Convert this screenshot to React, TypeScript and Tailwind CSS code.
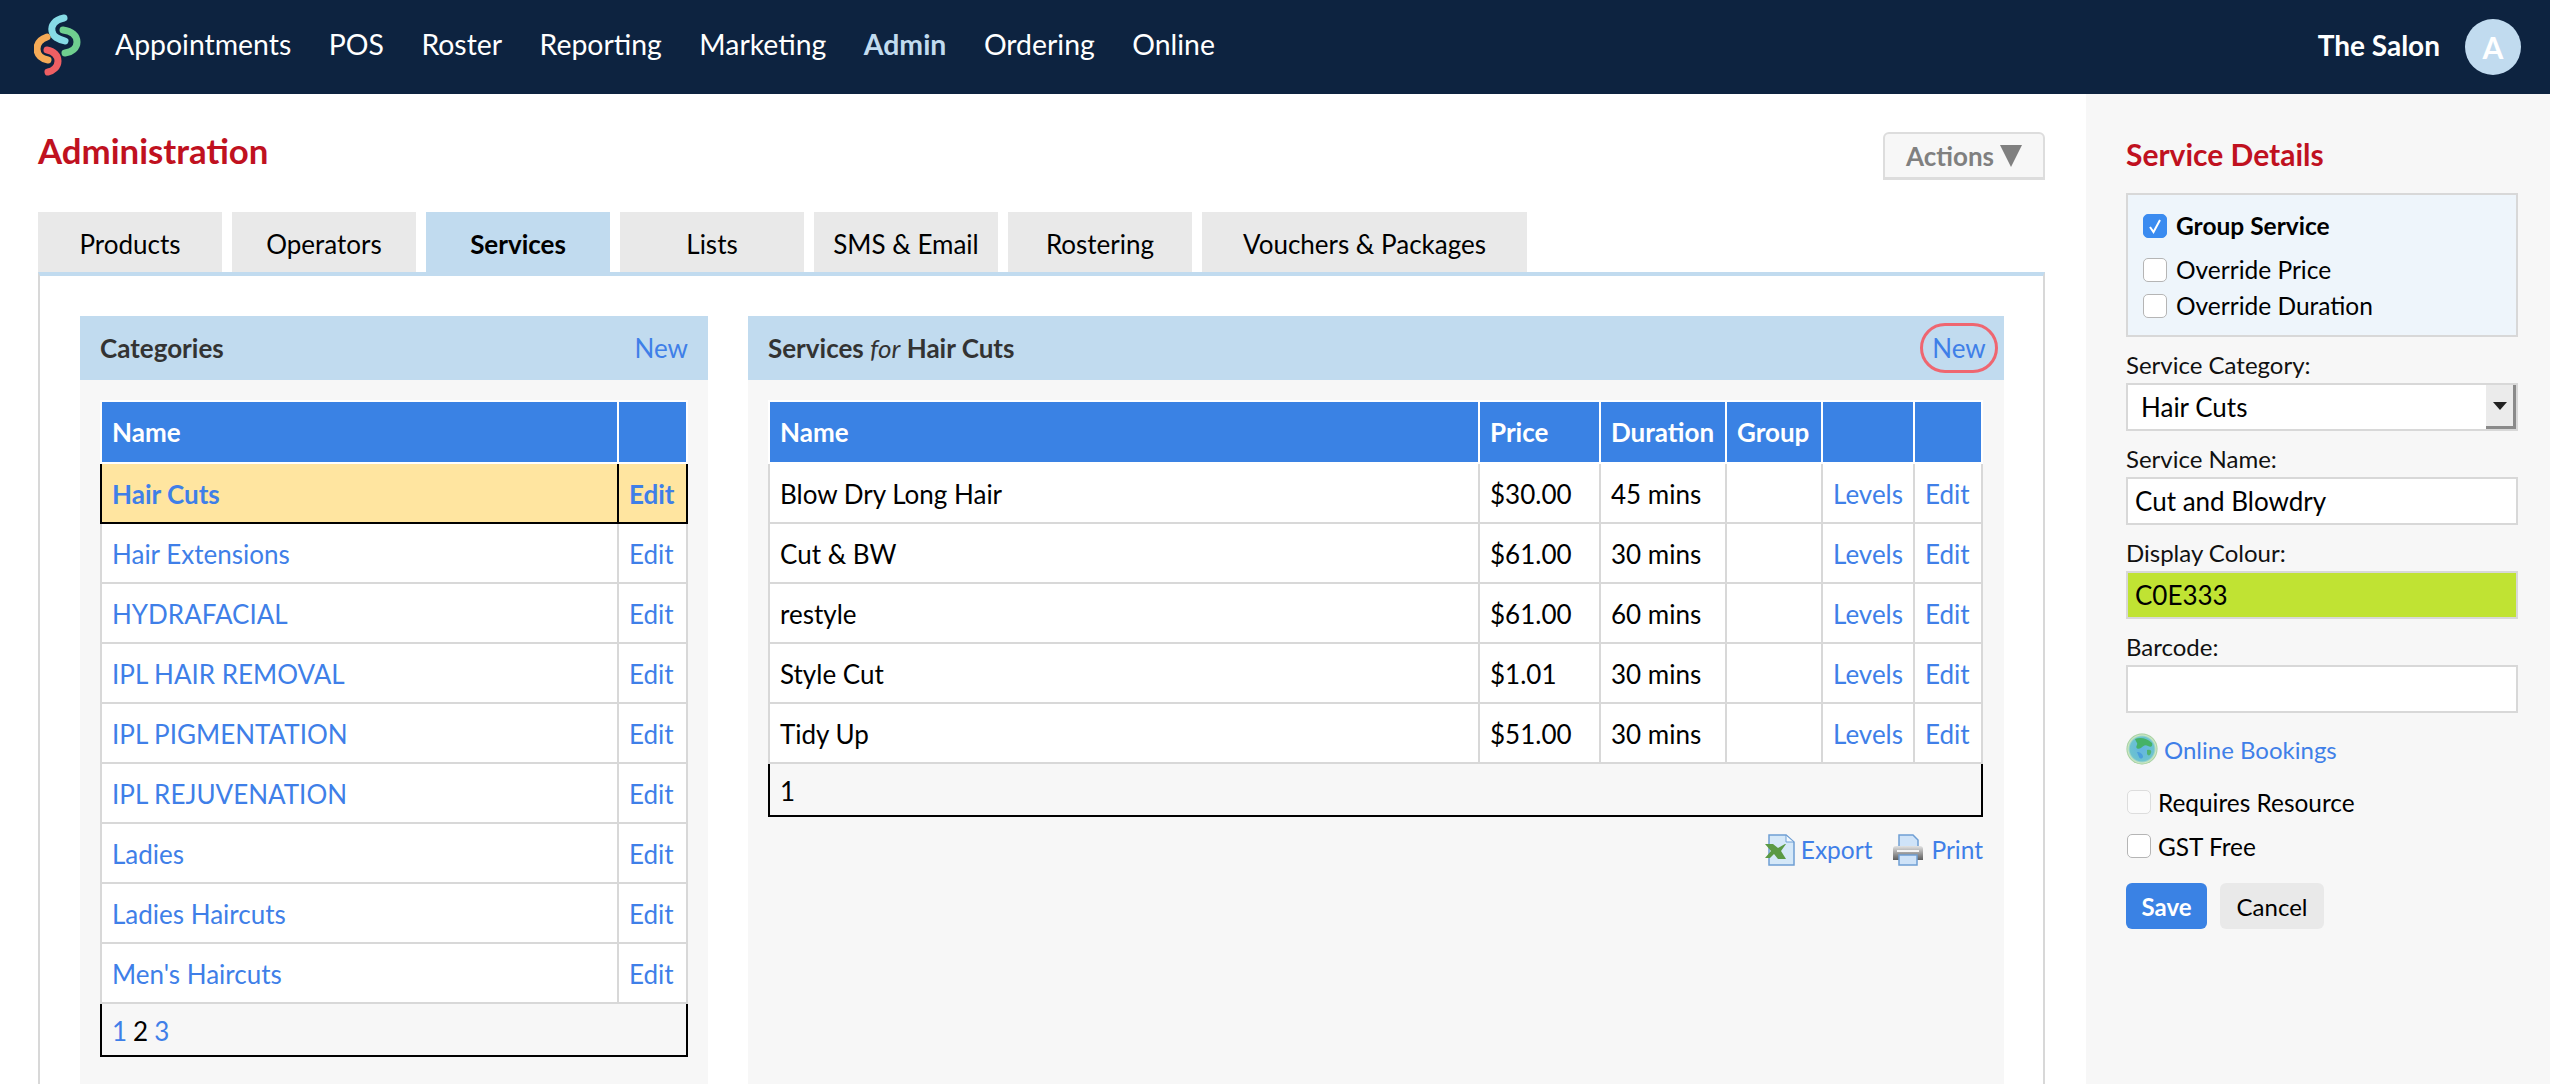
import React from 'react';

const navItems = ['Appointments', 'POS', 'Roster', 'Reporting', 'Marketing', 'Admin', 'Ordering', 'Online'];
const tabs = ['Products', 'Operators', 'Services', 'Lists', 'SMS & Email', 'Rostering', 'Vouchers & Packages'];
const categories = [
  'Hair Cuts',
  'Hair Extensions',
  'HYDRAFACIAL',
  'IPL HAIR REMOVAL',
  'IPL PIGMENTATION',
  'IPL REJUVENATION',
  'Ladies',
  'Ladies Haircuts',
  "Men's Haircuts",
];
const services = [
  { name: 'Blow Dry Long Hair', price: '$30.00', duration: '45 mins' },
  { name: 'Cut & BW', price: '$61.00', duration: '30 mins' },
  { name: 'restyle', price: '$61.00', duration: '60 mins' },
  { name: 'Style Cut', price: '$1.01', duration: '30 mins' },
  { name: 'Tidy Up', price: '$51.00', duration: '30 mins' },
];

const Logo = () => (
  <svg className="mb-[7px]" width="60" height="64" viewBox="0 0 60 64" fill="none" strokeWidth="7" strokeLinecap="round">
    <path d="M30 6 C20 8 17 14 18 19 C19 25 24 27 31 29" stroke="#86dbe6" />
    <path d="M29 18 C38 19 43 24 43 30 C43 36 38 40 31 41" stroke="#6fcf8f" />
    <path d="M13 25 C7 27 3 31 3 37 C3 43 8 47 14 48" stroke="#f5ab57" />
    <path d="M13 38 C20 39 24 44 24 49 C24 55 19 59 14 60" stroke="#ee5f63" />
  </svg>
);

const Globe = () => (
  <svg width="32" height="32" viewBox="0 0 32 32">
    <defs>
      <radialGradient id="globeBg" cx="0.5" cy="0.5" r="0.55">
        <stop offset="0" stopColor="#63b4e2" />
        <stop offset="0.7" stopColor="#6cc3cf" />
        <stop offset="0.82" stopColor="#cfe8c2" />
        <stop offset="1" stopColor="#5aa768" />
      </radialGradient>
    </defs>
    <circle cx="16" cy="16" r="15.5" fill="url(#globeBg)" />
    <path d="M9 6 C14 4 21 5 26 10 C27 13 25 15 22 13 C19 11 17 13 15 15 C12 17 9 15 11 12 C12 10 10 9 9 6Z" fill="#45b266" />
    <path d="M21 17 C24 16 26 17 25 20 C24 23 22 23 21 21Z" fill="#4fb36f" />
    <path d="M11 19 C14 19 17 21 17 24 C16 26 14 26 13 24Z" fill="#4a9fdc" />
  </svg>
);

const ExcelIcon = () => (
  <svg width="30" height="32" viewBox="0 0 30 32">
    <path d="M4 1 H21 L29 8 V31 H4Z" fill="#d5e8f8" stroke="#6f9fd4" strokeWidth="1.5" />
    <path d="M21 1 V8 H29Z" fill="#f2f8fd" stroke="#6f9fd4" strokeWidth="1" />
    <path d="M0 10 H8 L13 14 L20 10 H21 L16 17 L21 25 H13 L9 20 L5 24 H0 L6 17Z" fill="#5b9a44" />
  </svg>
);

const PrintIcon = () => (
  <svg width="32" height="32" viewBox="0 0 32 32">
    <defs>
      <linearGradient id="printBody" x1="0" y1="0" x2="0" y2="1">
        <stop offset="0" stopColor="#e2e2e2" />
        <stop offset="1" stopColor="#5c5c5c" />
      </linearGradient>
    </defs>
    <path d="M7 1 H21 L26 6 V15 H7Z" fill="#cfe3f8" stroke="#6f9fd4" strokeWidth="1.5" />
    <path d="M1 15 Q1 12 4 12 H28 Q31 12 31 15 V26 H1Z" fill="url(#printBody)" />
    <rect x="7" y="21" width="18" height="10" fill="#cfe3f8" stroke="#6f9fd4" strokeWidth="1.5" />
    <rect x="5" y="16" width="22" height="2" fill="#f4f4f4" />
  </svg>
);

const Checkbox = ({ checked = false, faded = false }: { checked?: boolean; faded?: boolean }) => (
  <span
    className={`flex h-6 w-6 shrink-0 items-center justify-center rounded-[5px] border ${
      checked ? 'border-[#3a8bf0] bg-[#3a8bf0]' : faded ? 'border-[#dddddd] bg-[#fbfbfb]' : 'border-[#b5b5b5] bg-white'
    }`}
  >
    {checked && (
      <svg width="14" height="18" viewBox="0 0 14 18" fill="none" stroke="white" strokeWidth="2">
        <path d="M2 10 L5.5 15 L12 3" />
      </svg>
    )}
  </span>
);

const Field = ({ label, children }: { label: string; children: React.ReactNode }) => (
  <div>
    <div className="h-[34px] text-[24px] leading-[32px] text-[#111]">{label}</div>
    {children}
  </div>
);

const Th = ({ children, className = '' }: { children?: React.ReactNode; className?: string }) => (
  <th className={`h-[62px] border-2 border-white px-[10px] text-left font-bold text-white ${className}`}>{children}</th>
);

const Td = ({ children }: { children?: React.ReactNode }) => (
  <td className="h-[60px] border-2 border-[#d8d8d8] px-[10px] pt-[2px] whitespace-nowrap">{children}</td>
);

const Link = ({ children }: { children: React.ReactNode }) => <span className="text-[#3f7fe8]">{children}</span>;

export default function App() {
  return (
    <div className="flex h-[1084px] w-[2550px] flex-col overflow-hidden bg-white font-['Lato','Liberation_Sans',sans-serif] text-[26px] text-black">
      <header className="flex h-[94px] shrink-0 items-center bg-[#0d2340] pr-[29px] pl-[34px] text-white">
        <Logo />
        <nav className="mb-[6px] ml-[21px] flex gap-[37.5px] text-[28.4px]">
          {navItems.map((item) =>
            item === 'Admin' ? (
              <span key={item} className="font-bold text-[#c1dbef]">
                {item}
              </span>
            ) : (
              <span key={item}>{item}</span>
            ),
          )}
        </nav>
        <div className="ml-auto flex items-center gap-[25px]">
          <span className="mb-[4px] text-[28px] font-bold">The Salon</span>
          <span className="flex h-[56px] w-[56px] items-center justify-center rounded-full bg-[#c1dbef] text-[30px] font-bold">
            A
          </span>
        </div>
      </header>

      <div className="flex min-h-0 flex-1">
        <main className="flex w-[2086px] flex-col pr-[41px] pl-[38px]">
          <div className="flex h-[118px] shrink-0 items-start justify-between pt-[37px]">
            <h1 className="text-[34.8px] leading-[40px] font-bold text-[#c0111f]">Administration</h1>
            <button className="mt-px flex h-[48px] w-[162px] items-center justify-center gap-[6px] rounded-t-[6px] border-2 border-b-[3px] border-[#dddddd] bg-[#f7f7f7] pt-px font-bold text-[#808080]">
              Actions
              <svg width="22" height="22" viewBox="0 0 22 22" fill="#808080">
                <path d="M0 0 H22 L11 22Z" />
              </svg>
            </button>
          </div>

          <div className="flex h-[60px] shrink-0 gap-[10px]">
            {tabs.map((tab) => (
              <div
                key={tab}
                className={`flex flex-none items-center justify-center pt-[4px] ${
                  tab === 'Vouchers & Packages' ? 'w-[325px]' : 'w-[184px]'
                } ${tab === 'Services' ? 'bg-[#c1dbef] font-bold' : 'bg-[#e9e9e9]'}`}
              >
                {tab}
              </div>
            ))}
          </div>

          <div className="flex min-h-0 flex-1 gap-[40px] border-x-2 border-t-4 border-x-[#d8d8d8] border-t-[#c1dbef] pt-[40px] pr-[39px] pl-[40px]">
            <section className="flex w-[628px] shrink-0 flex-col bg-[#f7f7f7]">
              <div className="flex h-[64px] shrink-0 items-center justify-between bg-[#c1dbef] pr-[20px] pl-[20px]">
                <span className="font-bold text-[#333]">Categories</span>
                <Link>New</Link>
              </div>
              <div className="pt-[20px] pr-[20px] pl-[20px]">
                <table className="w-full table-fixed border-collapse">
                  <thead>
                    <tr className="bg-[#3a82e4]">
                      <Th>Name</Th>
                      <Th className="w-[69px]" />
                    </tr>
                  </thead>
                  <tbody className="bg-white">
                    {categories.map((c, i) =>
                      i === 0 ? (
                        <tr key={c} className="bg-[#ffe5a0] font-bold text-[#3f7fe8]">
                          <td className="h-[60px] border-2 border-black px-[10px] pt-[2px]">{c}</td>
                          <td className="h-[60px] border-2 border-black px-[10px] pt-[2px]">Edit</td>
                        </tr>
                      ) : (
                        <tr key={c}>
                          <Td>
                            <Link>{c}</Link>
                          </Td>
                          <Td>
                            <Link>Edit</Link>
                          </Td>
                        </tr>
                      ),
                    )}
                    <tr className="bg-[#f7f7f7]">
                      <td colSpan={2} className="h-[53px] border-x-2 border-b-2 border-black px-[10px] pt-[3px]">
                        <span className="flex gap-[6px]">
                          <Link>1</Link>
                          <span>2</span>
                          <Link>3</Link>
                        </span>
                      </td>
                    </tr>
                  </tbody>
                </table>
              </div>
            </section>

            <section className="flex min-w-0 flex-1 flex-col bg-[#f7f7f7]">
              <div className="flex h-[64px] shrink-0 items-center justify-between bg-[#c1dbef] pr-[6px] pl-[20px]">
                <span className="font-bold text-[#333]">
                  Services <i className="font-normal">for</i> Hair Cuts
                </span>
                <span className="flex h-[50px] w-[78px] items-center justify-center rounded-full border-[3px] border-[#ef6670] text-[#3f7fe8]">
                  New
                </span>
              </div>
              <div className="pt-[20px] pr-[21px] pl-[20px]">
                <table className="w-full table-fixed border-collapse">
                  <thead>
                    <tr className="bg-[#3a82e4]">
                      <Th>Name</Th>
                      <Th className="w-[121px]">Price</Th>
                      <Th className="w-[126px]">Duration</Th>
                      <Th className="w-[96px]">Group</Th>
                      <Th className="w-[92px]" />
                      <Th className="w-[68px]" />
                    </tr>
                  </thead>
                  <tbody className="bg-white">
                    {services.map((s) => (
                      <tr key={s.name}>
                        <Td>{s.name}</Td>
                        <Td>{s.price}</Td>
                        <Td>{s.duration}</Td>
                        <Td />
                        <Td>
                          <Link>Levels</Link>
                        </Td>
                        <Td>
                          <Link>Edit</Link>
                        </Td>
                      </tr>
                    ))}
                    <tr className="bg-[#f7f7f7]">
                      <td colSpan={6} className="h-[53px] border-x-2 border-b-2 border-black px-[10px] pt-[3px]">
                        1
                      </td>
                    </tr>
                  </tbody>
                </table>
                <div className="mt-[15px] flex items-center justify-end text-[24.5px] text-[#3f7fe8]">
                  <ExcelIcon />
                  <span className="ml-[6px]">Export</span>
                  <span className="ml-[20px]">
                    <PrintIcon />
                  </span>
                  <span className="ml-[7px]">Print</span>
                </div>
              </div>
            </section>
          </div>
        </main>

        <aside className="flex-1 bg-[#f7f7f7] pr-[32px] pl-[40px]">
          <h2 className="pt-[44px] text-[30px] leading-[32px] font-bold text-[#c0111f]">Service Details</h2>
          <div className="mt-[23px] h-[144px] border-2 border-[#d8d8d8] bg-[#eef5fb] pt-[19px] pl-[15px] text-[24.5px]">
            <div className="flex h-[24px] items-center gap-[9px] font-bold">
              <Checkbox checked />
              Group Service
            </div>
            <div className="mt-[20px] flex h-[24px] items-center gap-[9px]">
              <Checkbox />
              Override Price
            </div>
            <div className="mt-[12px] flex h-[24px] items-center gap-[9px]">
              <Checkbox />
              Override Duration
            </div>
          </div>

          <div className="mt-[12px]">
            <Field label="Service Category:">
              <div className="flex h-[48px] border-2 border-[#d8d8d8] bg-white">
                <span className="flex flex-1 items-center pl-[13px]">Hair Cuts</span>
                <span className="flex w-[30px] items-center justify-center border-r-[3px] border-b-[3px] border-[#8a8a8a] bg-[#ebebeb]">
                  <svg width="14" height="8" viewBox="0 0 14 8" fill="#222">
                    <path d="M0 0 H14 L7 8Z" />
                  </svg>
                </span>
              </div>
            </Field>
          </div>
          <div className="mt-[12px]">
            <Field label="Service Name:">
              <div className="flex h-[48px] items-center border-2 border-[#d8d8d8] bg-white pl-[7px]">Cut and Blowdry</div>
            </Field>
          </div>
          <div className="mt-[12px]">
            <Field label="Display Colour:">
              <div className="flex h-[48px] items-center border-2 border-[#d8d8d8] bg-[#c0e333] pl-[7px]">C0E333</div>
            </Field>
          </div>
          <div className="mt-[12px]">
            <Field label="Barcode:">
              <div className="h-[48px] border-2 border-[#d8d8d8] bg-white" />
            </Field>
          </div>

          <div className="mt-[20px] flex h-[32px] items-center gap-[6px] text-[24px] text-[#3f7fe8]">
            <Globe />
            <span className="pt-[2px]">Online Bookings</span>
          </div>
          <div className="mt-[25px] flex h-[24px] items-center gap-[7px] pl-px text-[24.4px]">
            <Checkbox faded />
            <span className="pt-[2px]">Requires Resource</span>
          </div>
          <div className="mt-[20px] flex h-[24px] items-center gap-[7px] pl-px text-[24.4px]">
            <Checkbox />
            <span className="pt-[2px]">GST Free</span>
          </div>
          <div className="mt-[25px] flex gap-[13px] text-[24px]">
            <button className="h-[46px] w-[81px] rounded-[6px] bg-[#3a82e4] pt-[2px] font-bold text-white">Save</button>
            <button className="h-[46px] w-[104px] rounded-[6px] bg-[#e9e9e9] pt-[2px]">Cancel</button>
          </div>
        </aside>
      </div>
    </div>
  );
}
